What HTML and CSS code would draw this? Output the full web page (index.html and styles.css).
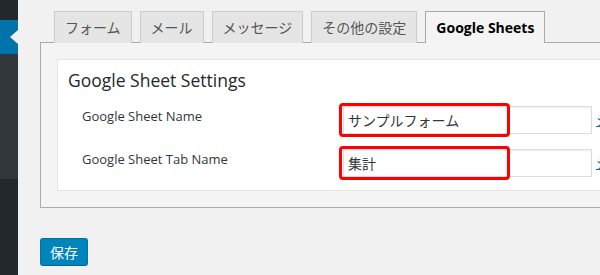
FILE: index.html
```html
<!DOCTYPE html>
<html lang="ja">
<head>
    <meta charset="UTF-8">
    <title>Google Sheets</title>
    <link rel="stylesheet" href="styles.css">
</head>
<body>
    <!-- Admin menu strip -->
    <div class="admin-menu">
        <div class="menu-top"></div>
        <div class="menu-current"><span class="menu-arrow"></span></div>
        <div class="menu-sub"></div>
        <div class="menu-rest"></div>
    </div>

    <div class="wrap">
        <div class="nav-tabs">
            <a class="nav-tab">フォーム</a>
            <a class="nav-tab">メール</a>
            <a class="nav-tab">メッセージ</a>
            <a class="nav-tab">その他の設定</a>
            <a class="nav-tab active">Google Sheets</a>
        </div>

        <div class="panel">
            <div class="settings-box">
                <h2 class="box-title">Google Sheet Settings</h2>
                <div class="form-row">
                    <label class="row-label">Google Sheet Name</label>
                    <div class="field">
                        <input class="text-input" type="text" value="サンプルフォーム">
                        <span class="marker"></span>
                    </div>
                    <a class="row-link">シートを開く</a>
                </div>
                <div class="form-row">
                    <label class="row-label">Google Sheet Tab Name</label>
                    <div class="field">
                        <input class="text-input" type="text" value="集計">
                        <span class="marker"></span>
                    </div>
                    <a class="row-link">シートを開く</a>
                </div>
            </div>
        </div>

        <button class="save-btn">保存</button>
    </div>
</body>
</html>
```

FILE: styles.css
```css
body {
    margin: 0;
    display: flex;
    height: 275px;
    overflow: hidden;
    background: #f1f1f1;
    color: #23282d;
    font-family: "Open Sans", "Noto Sans CJK JP", sans-serif;
}
.admin-menu {
    width: 18px;
    flex-shrink: 0;
    display: flex;
    flex-direction: column;
    background: #23282d;
}
.menu-top {
    height: 20px;
}
.menu-current {
    height: 34px;
    background: #0073aa;
    position: relative;
}
.menu-arrow {
    position: absolute;
    right: 0;
    top: 10px;
    border-top: 7px solid transparent;
    border-bottom: 7px solid transparent;
    border-right: 8px solid #f1f1f1;
}
.menu-sub {
    height: 125px;
    background: #32373c;
}
.wrap {
    flex: 1;
    min-width: 0;
    padding-left: 22px;
}
.nav-tabs {
    display: flex;
    gap: 8px;
    margin-top: 11px;
    margin-bottom: -1px;
    padding-left: 14px;
}
.nav-tab {
    position: relative;
    padding: 5px 10px 4px;
    line-height: 22px;
    font-size: 14px;
    color: #555;
    background: #e5e5e5;
    border: 1px solid #ccc;
    border-bottom: none;
    white-space: nowrap;
}
.nav-tab.active {
    color: #000;
    font-weight: bold;
    background: #f4f4f4;
    border-color: #aaa;
}
.panel {
    width: 640px;
    padding: 16px;
    background: #f4f4f4;
    border: 1px solid #aaa;
}
.settings-box {
    padding: 8px 8px 13px;
    background: #fff;
    border: 1px solid #e5e5e5;
}
.box-title {
    margin: 0 0 14px 2px;
    font-size: 17.5px;
    font-weight: normal;
    line-height: 24px;
}
.form-row {
    display: flex;
    align-items: flex-start;
    margin-left: 16px;
}
.form-row + .form-row {
    margin-top: 15px;
}
.row-label {
    width: 261px;
    flex-shrink: 0;
    font-size: 13px;
    line-height: 20px;
    color: #32373c;
}
.field {
    position: relative;
}
.text-input {
    display: block;
    box-sizing: border-box;
    width: 249px;
    height: 28px;
    margin: 0;
    padding: 0 4px;
    font-family: inherit;
    font-size: 14px;
    color: #32373c;
    background: #fff;
    border: 1px solid #ddd;
    box-shadow: inset 0 1px 2px rgba(0, 0, 0, 0.07);
}
.marker {
    position: absolute;
    left: -4px;
    top: -3px;
    width: 171px;
    height: 34px;
    box-sizing: border-box;
    border: 3px solid #f00;
    border-radius: 4px;
}
.row-link {
    margin-left: 4px;
    line-height: 28px;
    font-size: 14px;
    color: #0073aa;
    text-decoration: underline;
    white-space: nowrap;
}
.save-btn {
    display: block;
    margin-top: 30px;
    height: 28px;
    padding: 0 9px;
    font-family: inherit;
    font-size: 14px;
    color: #fff;
    background: #0085ba;
    border: 1px solid #0073aa;
    border-bottom-color: #006799;
    border-radius: 3px;
}
```
